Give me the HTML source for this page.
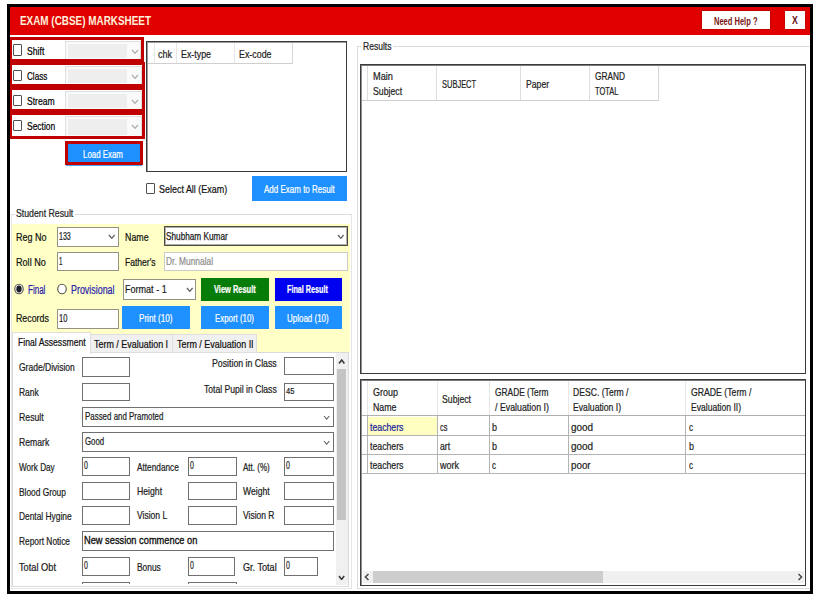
<!DOCTYPE html>
<html lang="en"><head><meta charset="utf-8"><title>EXAM (CBSE) MARKSHEET</title>
<style>
html,body{margin:0;padding:0;background:#fff;}
body{width:816px;height:598px;position:relative;overflow:hidden;font-family:"Liberation Sans",sans-serif;}
#app div,#app span,#app svg{position:absolute;box-sizing:border-box;}
#app .t{white-space:nowrap;transform-origin:0 50%;line-height:16px;-webkit-text-stroke:0.22px;}
</style></head><body><div id="app">
<div style="left:10px;top:7px;width:800.3px;height:28.4px;background:#e00000;"></div>
<span id="t0" class="t" style="left:20px;top:13px;font-size:12.5px;color:#fff1dc;font-weight:700;transform:scaleX(0.7925);-webkit-text-stroke:0;">EXAM (CBSE) MARKSHEET</span>
<div style="left:700.8px;top:10.2px;width:70.3px;height:20.2px;background:#fff;border:1px solid #c80000;"></div>
<span id="t1" class="t" style="left:714px;top:14px;font-size:10.2px;color:#7a1414;font-weight:700;transform:scaleX(0.7389);-webkit-text-stroke:0;">Need Help ?</span>
<div style="left:783.9px;top:10.2px;width:22.3px;height:20.2px;background:#fff;border:1px solid #c80000;"></div>
<span id="t2" class="t" style="left:791.6px;top:13px;font-size:10.2px;color:#6a1010;font-weight:700;transform:scaleX(0.8533);-webkit-text-stroke:0;">X</span>
<div style="left:10px;top:37px;width:133.7px;height:25px;background:#c00000;"></div>
<div style="left:12.2px;top:40px;width:128.5px;height:18.7px;background:#fff;"></div>
<div style="left:13.2px;top:44.45px;width:9.2px;height:11.2px;background:#fff;border:1px solid #505050;border-radius:1px;"></div>
<span id="t3" class="t" style="left:26.8px;top:43px;font-size:11px;color:#000;transform:scaleX(0.7858);">Shift</span>
<div style="left:65px;top:41px;width:75.7px;height:17.7px;background:#fafafa;border:1px solid #dedede;border-bottom:none;"></div>
<div style="left:68px;top:44px;width:59.3px;height:13.9px;background:#eeeeee;"></div>
<svg style="left:131.3px;top:48.8px;width:8px;height:5.3px" viewBox="-1 -1 8 5.3"><path d="M0 0 L3.0 3.3 L6 0" fill="none" stroke="#a8a8a8" stroke-width="1.15"/></svg>
<div style="left:10px;top:62px;width:135px;height:25.5px;background:#c00000;"></div>
<div style="left:12.2px;top:64.8px;width:129.8px;height:19.0px;background:#fff;"></div>
<div style="left:13.2px;top:69.55px;width:9.2px;height:11.2px;background:#fff;border:1px solid #505050;border-radius:1px;"></div>
<span id="t4" class="t" style="left:26.8px;top:68px;font-size:11px;color:#000;transform:scaleX(0.7378);">Class</span>
<div style="left:65px;top:65.8px;width:77px;height:18.0px;background:#fafafa;border:1px solid #dedede;border-bottom:none;"></div>
<div style="left:68px;top:68.8px;width:59.3px;height:14.2px;background:#eeeeee;"></div>
<svg style="left:131.3px;top:73.9px;width:8px;height:5.3px" viewBox="-1 -1 8 5.3"><path d="M0 0 L3.0 3.3 L6 0" fill="none" stroke="#a8a8a8" stroke-width="1.15"/></svg>
<div style="left:10px;top:87px;width:135px;height:25.5px;background:#c00000;"></div>
<div style="left:12.2px;top:89.8px;width:129.8px;height:19.0px;background:#fff;"></div>
<div style="left:13.2px;top:94.6px;width:9.2px;height:11.2px;background:#fff;border:1px solid #505050;border-radius:1px;"></div>
<span id="t5" class="t" style="left:26.8px;top:93px;font-size:11px;color:#000;transform:scaleX(0.7781);">Stream</span>
<div style="left:65px;top:90.8px;width:77px;height:18.0px;background:#fafafa;border:1px solid #dedede;border-bottom:none;"></div>
<div style="left:68px;top:93.8px;width:59.3px;height:14.2px;background:#eeeeee;"></div>
<svg style="left:131.3px;top:98.95px;width:8px;height:5.3px" viewBox="-1 -1 8 5.3"><path d="M0 0 L3.0 3.3 L6 0" fill="none" stroke="#a8a8a8" stroke-width="1.15"/></svg>
<div style="left:10px;top:112px;width:135px;height:27px;background:#c00000;"></div>
<div style="left:12.2px;top:114.8px;width:129.8px;height:20.8px;background:#fff;"></div>
<div style="left:13.2px;top:119.6px;width:9.2px;height:11.2px;background:#fff;border:1px solid #505050;border-radius:1px;"></div>
<span id="t6" class="t" style="left:26.8px;top:118px;font-size:11px;color:#000;transform:scaleX(0.7683);">Section</span>
<div style="left:65px;top:115.8px;width:77px;height:19.8px;background:#fafafa;border:1px solid #dedede;border-bottom:none;"></div>
<div style="left:68px;top:118.8px;width:59.3px;height:16.0px;background:#eeeeee;"></div>
<svg style="left:131.3px;top:123.95px;width:8px;height:5.3px" viewBox="-1 -1 8 5.3"><path d="M0 0 L3.0 3.3 L6 0" fill="none" stroke="#a8a8a8" stroke-width="1.15"/></svg>
<div style="left:65px;top:141px;width:78px;height:23.7px;background:#c00000;"></div>
<div style="left:68px;top:144px;width:72px;height:18px;background:#1e90ff;"></div>
<div style="left:66px;top:165px;width:75.5px;height:1px;background:#4aa0f8;"></div>
<span id="t7" class="t" style="left:83px;top:146px;font-size:10.7px;color:#fff;transform:scaleX(0.7378);">Load Exam</span>
<div style="left:145.5px;top:41.3px;width:201.8px;height:130.5px;background:#fff;border:1px solid #3c3c3c;"></div>
<div style="left:146.5px;top:42.3px;width:199.8px;height:128.5px;border-top:1px solid #9a9a9a;border-left:1px solid #9a9a9a;"></div>
<div style="left:147.5px;top:43.3px;width:145.0px;height:20.7px;background:#fff;border-bottom:1px solid #cfcfcf;border-right:1px solid #d8d8d8;"></div>
<div style="left:153.5px;top:43.3px;width:1.0px;height:20.2px;background:#e6e6e6;"></div>
<div style="left:175.8px;top:43.3px;width:1.0px;height:20.2px;background:#e6e6e6;"></div>
<div style="left:234px;top:43.3px;width:1px;height:20.2px;background:#e6e6e6;"></div>
<span id="t8" class="t" style="left:158px;top:46px;font-size:11px;color:#222;transform:scaleX(0.8175);">chk</span>
<span id="t9" class="t" style="left:181px;top:46px;font-size:11px;color:#222;transform:scaleX(0.8044);">Ex-type</span>
<span id="t10" class="t" style="left:239px;top:46px;font-size:11px;color:#222;transform:scaleX(0.8053);">Ex-code</span>
<div style="left:145.8px;top:183px;width:9.0px;height:10.5px;background:#fff;border:1px solid #505050;border-radius:1px;"></div>
<span id="t11" class="t" style="left:158.9px;top:181px;font-size:11.3px;color:#111;transform:scaleX(0.7929);">Select All (Exam)</span>
<div style="left:251.8px;top:176.3px;width:95.4px;height:24.7px;background:#1e90ff;"></div>
<span id="t12" class="t" style="left:264px;top:181px;font-size:10.6px;color:#fff;transform:scaleX(0.7551);">Add Exam to Result</span>
<div style="left:11.3px;top:213.5px;width:340.7px;height:375.5px;border:1px solid #e6e6e6;border-top:1px solid #dcdcdc;border-left:1px solid #e6e6e6;border-right:1px solid #e6e6e6;"></div>
<div style="left:14.5px;top:207px;width:60.5px;height:13px;background:#fff;"></div>
<span id="t13" class="t" style="left:16.1px;top:205px;font-size:11px;color:#222;transform:scaleX(0.7941);">Student Result</span>
<div style="left:11.8px;top:224px;width:338.1px;height:129px;background:#ffffc6;"></div>
<span id="t14" class="t" style="left:16.2px;top:229px;font-size:11px;color:#111;transform:scaleX(0.8204);">Reg No</span>
<div style="left:57px;top:226.6px;width:61.8px;height:20.1px;background:#fff;border:1px solid #929286;"></div>
<span id="t15" class="t" style="left:59.2px;top:229px;font-size:10px;color:#222;transform:scaleX(0.7071);">133</span>
<svg style="left:107.9px;top:233.65px;width:7.6px;height:5.3px" viewBox="-1 -1 7.6 5.3"><path d="M0 0 L2.8 3.3 L5.6 0" fill="none" stroke="#606060" stroke-width="1.3"/></svg>
<span id="t16" class="t" style="left:125.1px;top:229px;font-size:11px;color:#111;transform:scaleX(0.8043);">Name</span>
<div style="left:163.8px;top:226.4px;width:183.9px;height:20.1px;background:#fff;border:1px solid #4a4a40;"></div>
<div style="left:164.8px;top:227.4px;width:181.9px;height:18.1px;border:1px solid #b0b0a8;"></div>
<span id="t17" class="t" style="left:165.9px;top:229px;font-size:10.3px;color:#1a1a1a;transform:scaleX(0.7984);-webkit-text-stroke:0.25px #1a1a1a;">Shubham Kumar</span>
<svg style="left:337.2px;top:233.65px;width:7.6px;height:5.3px" viewBox="-1 -1 7.6 5.3"><path d="M0 0 L2.8 3.3 L5.6 0" fill="none" stroke="#606060" stroke-width="1.3"/></svg>
<span id="t18" class="t" style="left:16.2px;top:254px;font-size:11px;color:#111;transform:scaleX(0.8260);">Roll No</span>
<div style="left:57px;top:252px;width:61.8px;height:19.4px;background:#fff;border:1px solid #929286;"></div>
<span id="t19" class="t" style="left:59.2px;top:254px;font-size:10px;color:#222;transform:scaleX(0.6112);">1</span>
<span id="t20" class="t" style="left:125.1px;top:254px;font-size:11px;color:#111;transform:scaleX(0.7765);">Father's</span>
<div style="left:163.8px;top:252px;width:183.9px;height:19.4px;background:#fff;border:1px solid #cacaca;"></div>
<span id="t21" class="t" style="left:165.9px;top:254px;font-size:10.3px;color:#8e8e8e;transform:scaleX(0.8147);">Dr. Munnalal</span>
<svg style="left:11.8px;top:282.2px;width:14px;height:14px" viewBox="0 0 14 14"><ellipse cx="7" cy="7" rx="4.25" ry="4.75" fill="#fff" stroke="#55554a" stroke-width="1.15"/><ellipse cx="7" cy="7" rx="2.7" ry="3.4" fill="#1c1c28"/></svg>
<span id="t22" class="t" style="left:27.5px;top:282px;font-size:12px;color:#2a22aa;transform:scaleX(0.6688);">Final</span>
<svg style="left:54.6px;top:282.2px;width:14px;height:14px" viewBox="0 0 14 14"><ellipse cx="7" cy="7" rx="4.25" ry="4.75" fill="#fff" stroke="#55554a" stroke-width="1.15"/></svg>
<span id="t23" class="t" style="left:70.6px;top:282px;font-size:12px;color:#2a22aa;transform:scaleX(0.7410);">Provisional</span>
<div style="left:123.2px;top:279px;width:73.0px;height:20.7px;background:#fff;border:1px solid #929286;"></div>
<span id="t24" class="t" style="left:125.1px;top:281px;font-size:11px;color:#1a1a1a;transform:scaleX(0.8219);">Format - 1</span>
<svg style="left:186.2px;top:287.15px;width:7.6px;height:5.3px" viewBox="-1 -1 7.6 5.3"><path d="M0 0 L2.8 3.3 L5.6 0" fill="none" stroke="#606060" stroke-width="1.3"/></svg>
<div style="left:201.2px;top:277.6px;width:67.8px;height:23.4px;background:#087c08;"></div>
<span id="t25" class="t" style="left:214px;top:282px;font-size:10.4px;color:#fff;font-weight:700;transform:scaleX(0.7172);">View Result</span>
<div style="left:274.8px;top:277.6px;width:67.7px;height:23.4px;background:#0000f0;"></div>
<span id="t26" class="t" style="left:287.4px;top:282px;font-size:10.4px;color:#fff;font-weight:700;transform:scaleX(0.6928);">Final Result</span>
<span id="t27" class="t" style="left:16.2px;top:310px;font-size:11px;color:#111;transform:scaleX(0.8006);">Records</span>
<div style="left:57px;top:309.1px;width:61.8px;height:19.6px;background:#fff;border:1px solid #929286;"></div>
<span id="t28" class="t" style="left:59.2px;top:311px;font-size:10px;color:#222;transform:scaleX(0.7551);">10</span>
<div style="left:122.2px;top:306.3px;width:67.7px;height:23.2px;background:#1e90ff;"></div>
<span id="t29" class="t" style="left:138.8px;top:310px;font-size:10.8px;color:#fff;transform:scaleX(0.7521);">Print (10)</span>
<div style="left:201.2px;top:306.3px;width:67.8px;height:23.2px;background:#1e90ff;"></div>
<span id="t30" class="t" style="left:215.3px;top:310px;font-size:10.8px;color:#fff;transform:scaleX(0.7284);">Export (10)</span>
<div style="left:274.7px;top:306.3px;width:67.7px;height:23.2px;background:#1e90ff;"></div>
<span id="t31" class="t" style="left:287.4px;top:310px;font-size:10.8px;color:#fff;transform:scaleX(0.7391);">Upload (10)</span>
<div style="left:12px;top:352.2px;width:337.3px;height:234.6px;background:#fff;border:1px solid #dadada;"></div>
<div style="left:90.4px;top:334px;width:82.2px;height:18.7px;background:#f0f0f0;border:1px solid #dedede;"></div>
<div style="left:172px;top:334px;width:85px;height:18.7px;background:#f0f0f0;border:1px solid #dedede;"></div>
<div style="left:12px;top:332px;width:79px;height:21.5px;background:#fff;border:1px solid #dedede;border-bottom:none;"></div>
<span id="t32" class="t" style="left:17.6px;top:335px;font-size:10.4px;color:#111;transform:scaleX(0.8313);">Final Assessment</span>
<span id="t33" class="t" style="left:94.1px;top:337px;font-size:10.4px;color:#111;transform:scaleX(0.8612);">Term / Evaluation I</span>
<span id="t34" class="t" style="left:177px;top:337px;font-size:10.4px;color:#111;transform:scaleX(0.8613);">Term / Evaluation II</span>
<div style="left:336.3px;top:353.2px;width:11.6px;height:231.6px;background:#f0f0f0;"></div>
<div style="left:336.9px;top:368.8px;width:9.4px;height:151.2px;background:#c4c4c4;"></div>
<svg style="left:337.9px;top:359.0px;width:7.4px;height:5.4px" viewBox="-1 -1 7.4 5.4"><path d="M0 3.4 L2.7 0 L5.4 3.4" fill="none" stroke="#3a3a3a" stroke-width="1.6"/></svg>
<svg style="left:337.9px;top:574.8px;width:7.2px;height:5.4px" viewBox="-1 -1 7.2 5.4"><path d="M0 0 L2.6 3.4 L5.2 0" fill="none" stroke="#3a3a3a" stroke-width="1.6"/></svg>
<span id="t35" class="t" style="left:19.2px;top:360px;font-size:10.4px;color:#1c1c1c;transform:scaleX(0.8187);">Grade/Division</span>
<div style="left:82px;top:356.8px;width:48.4px;height:20.4px;background:#fff;border:1px solid #707070;"></div>
<span id="t36" class="t" style="left:212.1px;top:356px;font-size:10.4px;color:#1c1c1c;transform:scaleX(0.8423);">Position in Class</span>
<div style="left:284.2px;top:356.7px;width:49.4px;height:18.6px;background:#fff;border:1px solid #707070;"></div>
<span id="t37" class="t" style="left:19.2px;top:385px;font-size:10.4px;color:#1c1c1c;transform:scaleX(0.8160);">Rank</span>
<div style="left:82px;top:383px;width:48.4px;height:18.4px;background:#fff;border:1px solid #707070;"></div>
<span id="t38" class="t" style="left:204.1px;top:382px;font-size:10.4px;color:#1c1c1c;transform:scaleX(0.8280);">Total Pupil in Class</span>
<div style="left:284.2px;top:382.7px;width:49.4px;height:18.7px;background:#fff;border:1px solid #707070;"></div>
<span id="t39" class="t" style="left:285.7px;top:383px;font-size:9.2px;color:#1c1c1c;transform:scaleX(0.8208);">45</span>
<span id="t40" class="t" style="left:19.2px;top:410px;font-size:10.4px;color:#1c1c1c;transform:scaleX(0.8386);">Result</span>
<div style="left:82px;top:407px;width:251.6px;height:19.6px;background:#fff;border:1px solid #707070;"></div>
<span id="t41" class="t" style="left:84.6px;top:409px;font-size:10.2px;color:#1c1c1c;transform:scaleX(0.7777);">Passed and Pramoted</span>
<svg style="left:323.4px;top:414.6px;width:7.4px;height:5.2px" viewBox="-1 -1 7.4 5.2"><path d="M0 0 L2.7 3.2 L5.4 0" fill="none" stroke="#666" stroke-width="1.1"/></svg>
<span id="t42" class="t" style="left:19.2px;top:435px;font-size:10.4px;color:#1c1c1c;transform:scaleX(0.8330);">Remark</span>
<div style="left:82px;top:432.3px;width:251.6px;height:19.4px;background:#fff;border:1px solid #707070;"></div>
<span id="t43" class="t" style="left:84.6px;top:434px;font-size:10.2px;color:#1c1c1c;transform:scaleX(0.7664);">Good</span>
<svg style="left:323.4px;top:439.8px;width:7.4px;height:5.2px" viewBox="-1 -1 7.4 5.2"><path d="M0 0 L2.7 3.2 L5.4 0" fill="none" stroke="#666" stroke-width="1.1"/></svg>
<span id="t44" class="t" style="left:19.2px;top:460px;font-size:10.4px;color:#1c1c1c;transform:scaleX(0.7860);">Work Day</span>
<div style="left:82px;top:457.4px;width:48.4px;height:18.7px;background:#fff;border:1px solid #707070;"></div>
<span id="t45" class="t" style="left:84.1px;top:458px;font-size:10.4px;color:#1c1c1c;transform:scaleX(0.6746);">0</span>
<span id="t46" class="t" style="left:136.7px;top:460px;font-size:10.4px;color:#1c1c1c;transform:scaleX(0.7950);">Attendance</span>
<div style="left:188px;top:457.4px;width:48.5px;height:18.7px;background:#fff;border:1px solid #707070;"></div>
<span id="t47" class="t" style="left:190.1px;top:458px;font-size:10.4px;color:#1c1c1c;transform:scaleX(0.6746);">0</span>
<span id="t48" class="t" style="left:242.7px;top:460px;font-size:10.4px;color:#1c1c1c;transform:scaleX(0.7708);">Att. (%)</span>
<div style="left:284.2px;top:457.4px;width:49.4px;height:18.7px;background:#fff;border:1px solid #707070;"></div>
<span id="t49" class="t" style="left:286.3px;top:458px;font-size:10.4px;color:#1c1c1c;transform:scaleX(0.6746);">0</span>
<span id="t50" class="t" style="left:19.2px;top:485px;font-size:10.4px;color:#1c1c1c;transform:scaleX(0.8039);">Blood Group</span>
<div style="left:82px;top:481.8px;width:48.4px;height:18.7px;background:#fff;border:1px solid #707070;"></div>
<span id="t51" class="t" style="left:136.7px;top:484px;font-size:10.4px;color:#1c1c1c;transform:scaleX(0.8354);">Height</span>
<div style="left:188px;top:481.8px;width:48.5px;height:18.7px;background:#fff;border:1px solid #707070;"></div>
<span id="t52" class="t" style="left:242.7px;top:484px;font-size:10.4px;color:#1c1c1c;transform:scaleX(0.8303);">Weight</span>
<div style="left:284.2px;top:481.8px;width:49.4px;height:18.7px;background:#fff;border:1px solid #707070;"></div>
<span id="t53" class="t" style="left:19.2px;top:509px;font-size:10.4px;color:#1c1c1c;transform:scaleX(0.8057);">Dental Hygine</span>
<div style="left:82px;top:505.9px;width:48.4px;height:18.8px;background:#fff;border:1px solid #707070;"></div>
<span id="t54" class="t" style="left:136.7px;top:508px;font-size:10.4px;color:#1c1c1c;transform:scaleX(0.8211);">Vision L</span>
<div style="left:188px;top:505.9px;width:48.5px;height:18.8px;background:#fff;border:1px solid #707070;"></div>
<span id="t55" class="t" style="left:242.7px;top:508px;font-size:10.4px;color:#1c1c1c;transform:scaleX(0.8178);">Vision R</span>
<div style="left:284.2px;top:505.9px;width:49.4px;height:18.8px;background:#fff;border:1px solid #707070;"></div>
<span id="t56" class="t" style="left:19.2px;top:534px;font-size:10.4px;color:#1c1c1c;transform:scaleX(0.8028);">Report Notice</span>
<div style="left:82px;top:530.5px;width:251.6px;height:20.7px;background:#fff;border:1px solid #707070;"></div>
<span id="t57" class="t" style="left:84.1px;top:532px;font-size:11.2px;color:#111;transform:scaleX(0.8282);-webkit-text-stroke:0.35px #111;">New session commence on</span>
<span id="t58" class="t" style="left:19.2px;top:560px;font-size:10.4px;color:#1c1c1c;transform:scaleX(0.8896);">Total Obt</span>
<div style="left:82px;top:557.4px;width:48.4px;height:19.0px;background:#fff;border:1px solid #707070;"></div>
<span id="t59" class="t" style="left:84.1px;top:558px;font-size:10.4px;color:#1c1c1c;transform:scaleX(0.6746);">0</span>
<span id="t60" class="t" style="left:136.7px;top:560px;font-size:10.4px;color:#1c1c1c;transform:scaleX(0.8076);">Bonus</span>
<div style="left:188px;top:557.4px;width:46.6px;height:19.0px;background:#fff;border:1px solid #707070;"></div>
<span id="t61" class="t" style="left:190.1px;top:558px;font-size:10.4px;color:#1c1c1c;transform:scaleX(0.6746);">0</span>
<span id="t62" class="t" style="left:242.7px;top:560px;font-size:10.4px;color:#1c1c1c;transform:scaleX(0.8750);">Gr. Total</span>
<div style="left:284.2px;top:557.4px;width:33.7px;height:19.0px;background:#fff;border:1px solid #707070;"></div>
<span id="t63" class="t" style="left:286.3px;top:558px;font-size:10.4px;color:#1c1c1c;transform:scaleX(0.6746);">0</span>
<div style="left:82px;top:582.3px;width:48.4px;height:2.2px;background:#fff;border-top:1px solid #707070;border-left:1px solid #707070;border-right:1px solid #707070;"></div>
<div style="left:188px;top:582.3px;width:48.5px;height:2.2px;background:#fff;border-top:1px solid #707070;border-left:1px solid #707070;border-right:1px solid #707070;"></div>
<div style="left:356.7px;top:46px;width:455.3px;height:542.6px;border:1px solid #dcdcdc;"></div>
<div style="left:360.5px;top:40px;width:32.0px;height:13px;background:#fff;"></div>
<span id="t64" class="t" style="left:362.6px;top:38px;font-size:11px;color:#222;transform:scaleX(0.7741);">Results</span>
<div style="left:360.2px;top:64px;width:446.0px;height:310px;background:#fff;border:1px solid #3c3c3c;"></div>
<div style="left:361.2px;top:65px;width:444.0px;height:308px;border-top:1px solid #7a7a7a;border-left:1px solid #909090;"></div>
<div style="left:362.2px;top:66px;width:297.0px;height:34.6px;background:#fff;border-bottom:1px solid #cfcfcf;border-right:1px solid #d6d6d6;"></div>
<div style="left:367.4px;top:66.2px;width:1.0px;height:33.8px;background:#dedede;"></div>
<div style="left:436.4px;top:66.2px;width:1.0px;height:33.8px;background:#dedede;"></div>
<div style="left:520px;top:66.2px;width:1px;height:33.8px;background:#dedede;"></div>
<div style="left:589.3px;top:66.2px;width:1.0px;height:33.8px;background:#dedede;"></div>
<span id="t65" class="t" style="left:372.9px;top:68px;font-size:11px;color:#222;transform:scaleX(0.8388);">Main</span>
<span id="t66" class="t" style="left:372.9px;top:83px;font-size:11px;color:#222;transform:scaleX(0.7928);">Subject</span>
<span id="t67" class="t" style="left:442.4px;top:76px;font-size:11px;color:#222;transform:scaleX(0.6803);">SUBJECT</span>
<span id="t68" class="t" style="left:525.7px;top:76px;font-size:11px;color:#222;transform:scaleX(0.7868);">Paper</span>
<span id="t69" class="t" style="left:594.7px;top:68px;font-size:11px;color:#222;transform:scaleX(0.7550);">GRAND</span>
<span id="t70" class="t" style="left:594.7px;top:83px;font-size:11px;color:#222;transform:scaleX(0.6824);">TOTAL</span>
<div style="left:360.2px;top:379.2px;width:446.0px;height:206.5px;background:#fff;border:1px solid #3c3c3c;"></div>
<div style="left:361.2px;top:380.2px;width:444.0px;height:204.5px;border-top:1px solid #7a7a7a;border-left:1px solid #909090;"></div>
<div style="left:362.2px;top:381.2px;width:443.0px;height:35.2px;background:#fff;border-bottom:1px solid #b0b0b0;"></div>
<div style="left:367.4px;top:381.4px;width:1.0px;height:34.1px;background:#e6e6e6;"></div>
<div style="left:436.6px;top:381.4px;width:1.0px;height:34.1px;background:#e6e6e6;"></div>
<div style="left:488.9px;top:381.4px;width:1.0px;height:34.1px;background:#e6e6e6;"></div>
<div style="left:567.8px;top:381.4px;width:1.0px;height:34.1px;background:#e6e6e6;"></div>
<div style="left:685.2px;top:381.4px;width:1.0px;height:34.1px;background:#e6e6e6;"></div>
<div style="left:368.2px;top:416.6px;width:68.4px;height:18.4px;background:#ffffc2;"></div>
<div style="left:362.2px;top:435px;width:443.0px;height:1px;background:#b4b4b4;"></div>
<div style="left:362.2px;top:454.2px;width:443.0px;height:1.0px;background:#b4b4b4;"></div>
<div style="left:362.2px;top:473.2px;width:443.0px;height:1.0px;background:#b4b4b4;"></div>
<div style="left:367.4px;top:416px;width:1.0px;height:57.4px;background:#b4b4b4;"></div>
<div style="left:436.6px;top:416px;width:1.0px;height:57.4px;background:#b4b4b4;"></div>
<div style="left:488.9px;top:416px;width:1.0px;height:57.4px;background:#b4b4b4;"></div>
<div style="left:567.8px;top:416px;width:1.0px;height:57.4px;background:#b4b4b4;"></div>
<div style="left:685.2px;top:416px;width:1.0px;height:57.4px;background:#b4b4b4;"></div>
<span id="t71" class="t" style="left:373.3px;top:384px;font-size:11px;color:#222;transform:scaleX(0.8143);">Group</span>
<span id="t72" class="t" style="left:373.3px;top:399px;font-size:11px;color:#222;transform:scaleX(0.8009);">Name</span>
<span id="t73" class="t" style="left:442.3px;top:391px;font-size:11px;color:#222;transform:scaleX(0.7901);">Subject</span>
<span id="t74" class="t" style="left:494.7px;top:384px;font-size:11px;color:#222;transform:scaleX(0.7612);">GRADE (Term</span>
<span id="t75" class="t" style="left:494.7px;top:399px;font-size:11px;color:#222;transform:scaleX(0.8013);">/ Evaluation I)</span>
<span id="t76" class="t" style="left:573.1px;top:384px;font-size:11px;color:#222;transform:scaleX(0.7827);">DESC. (Term /</span>
<span id="t77" class="t" style="left:573.1px;top:399px;font-size:11px;color:#222;transform:scaleX(0.7865);">Evaluation I)</span>
<span id="t78" class="t" style="left:691.2px;top:384px;font-size:11px;color:#222;transform:scaleX(0.7905);">GRADE (Term /</span>
<span id="t79" class="t" style="left:691.2px;top:399px;font-size:11px;color:#222;transform:scaleX(0.7788);">Evaluation II)</span>
<span id="t80" class="t" style="left:370.1px;top:419px;font-size:11px;color:#1a1a9a;transform:scaleX(0.7938);">teachers</span>
<span id="t81" class="t" style="left:439.9px;top:419px;font-size:11px;color:#222;transform:scaleX(0.6727);">cs</span>
<span id="t82" class="t" style="left:491.7px;top:419px;font-size:11px;color:#222;transform:scaleX(0.8163);">b</span>
<span id="t83" class="t" style="left:570.6px;top:419px;font-size:11px;color:#222;transform:scaleX(0.9026);">good</span>
<span id="t84" class="t" style="left:688.6px;top:419px;font-size:11px;color:#222;transform:scaleX(0.7273);">c</span>
<span id="t85" class="t" style="left:370.1px;top:438px;font-size:11px;color:#222;transform:scaleX(0.7938);">teachers</span>
<span id="t86" class="t" style="left:439.9px;top:438px;font-size:11px;color:#222;transform:scaleX(0.7942);">art</span>
<span id="t87" class="t" style="left:491.7px;top:438px;font-size:11px;color:#222;transform:scaleX(0.8163);">b</span>
<span id="t88" class="t" style="left:570.6px;top:438px;font-size:11px;color:#222;transform:scaleX(0.9026);">good</span>
<span id="t89" class="t" style="left:688.6px;top:438px;font-size:11px;color:#222;transform:scaleX(0.8163);">b</span>
<span id="t90" class="t" style="left:370.1px;top:457px;font-size:11px;color:#222;transform:scaleX(0.7938);">teachers</span>
<span id="t91" class="t" style="left:439.9px;top:457px;font-size:11px;color:#222;transform:scaleX(0.8178);">work</span>
<span id="t92" class="t" style="left:491.7px;top:457px;font-size:11px;color:#222;transform:scaleX(0.7273);">c</span>
<span id="t93" class="t" style="left:570.6px;top:457px;font-size:11px;color:#222;transform:scaleX(0.8896);">poor</span>
<span id="t94" class="t" style="left:688.6px;top:457px;font-size:11px;color:#222;transform:scaleX(0.7273);">c</span>
<div style="left:362.6px;top:571.3px;width:441.2px;height:11.7px;background:#f0f0f0;"></div>
<div style="left:372.9px;top:571.3px;width:230.1px;height:11.7px;background:#cdcdcd;"></div>
<svg style="left:364px;top:573.3px;width:6px;height:8px" viewBox="0 0 6 8"><path d="M4.5 1 L1.4 4 L4.5 7" fill="none" stroke="#444" stroke-width="1.4"/></svg>
<svg style="left:796.6px;top:573.3px;width:6px;height:8px" viewBox="0 0 6 8"><path d="M1.5 1 L4.6 4 L1.5 7" fill="none" stroke="#444" stroke-width="1.4"/></svg>
<div style="left:7px;top:4px;width:806.2px;height:589.8px;border:3px solid #000;border-left-width:3.3px;"></div>
</div></body></html>
